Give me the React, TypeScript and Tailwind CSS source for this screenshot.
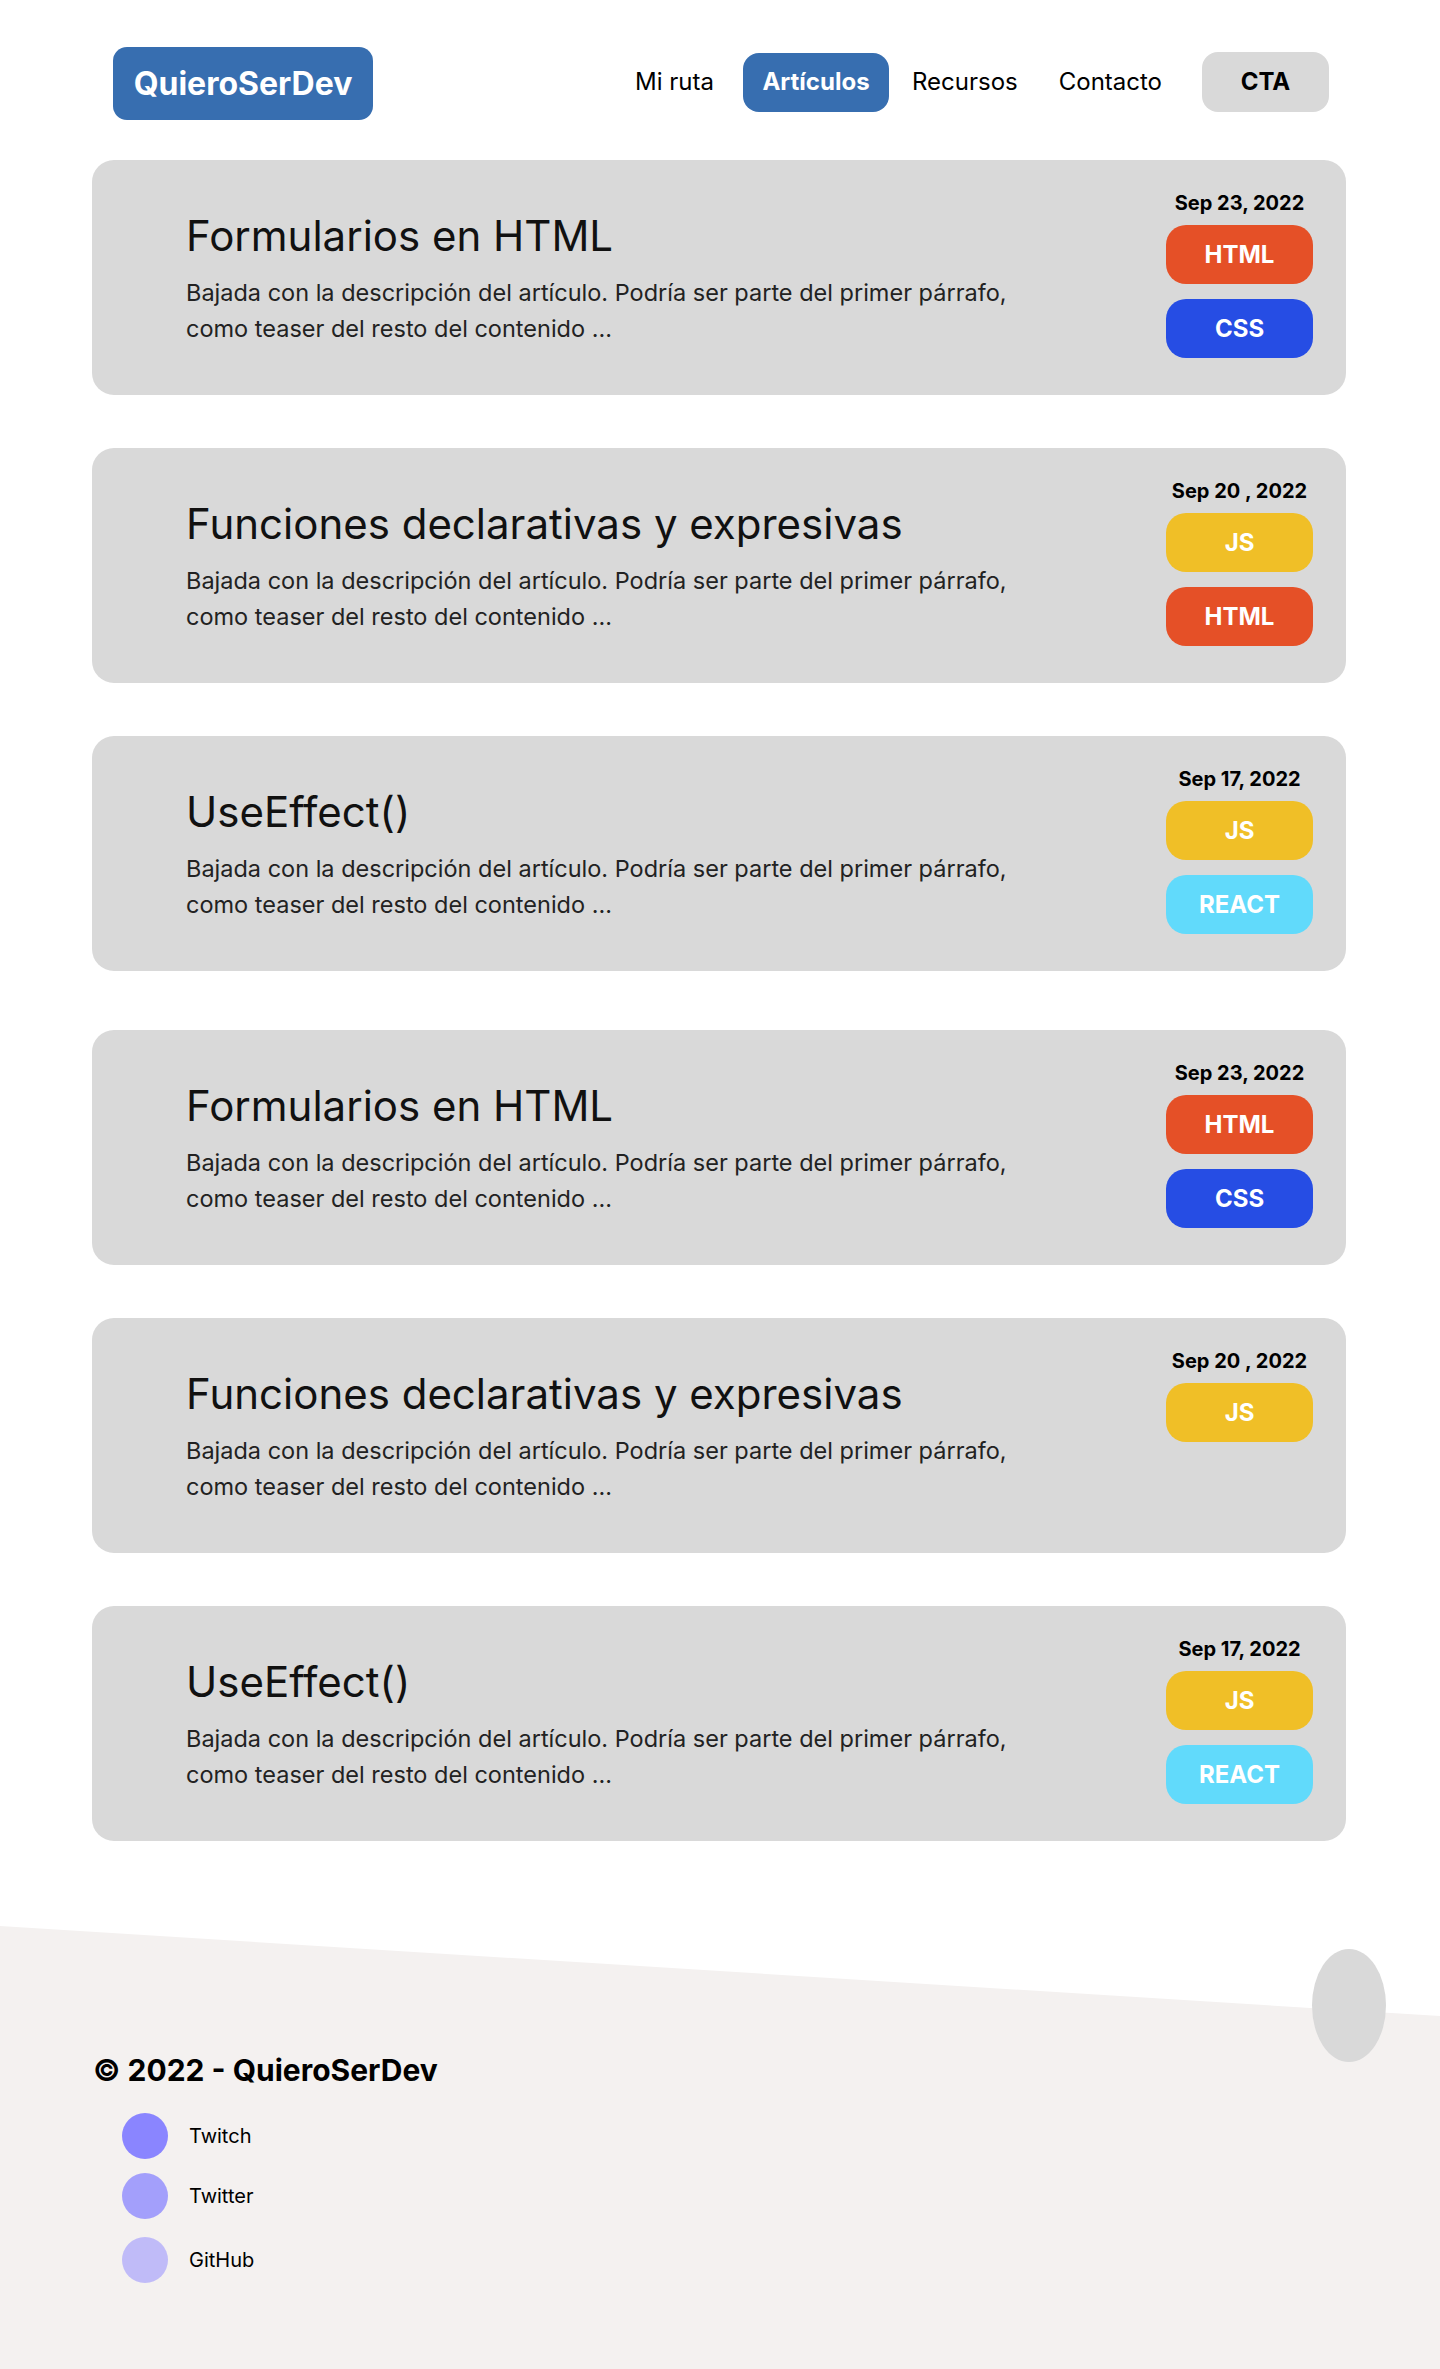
import React from 'react';

type Tag = 'HTML' | 'CSS' | 'JS' | 'REACT';

interface Post {
  title: string;
  date: string;
  tags: Tag[];
}

const tagStyles: Record<Tag, string> = {
  HTML: 'bg-[#e55027]',
  CSS: 'bg-[#264de4]',
  JS: 'bg-[#f0bf27]',
  REACT: 'bg-[#61dafb]',
};

const excerpt = [
  'Bajada con la descripción del artículo. Podría ser parte del primer párrafo,',
  'como teaser del resto del contenido ...',
];

const firstGroup: Post[] = [
  { title: 'Formularios en HTML', date: 'Sep 23, 2022', tags: ['HTML', 'CSS'] },
  { title: 'Funciones declarativas y expresivas', date: 'Sep 20 , 2022', tags: ['JS', 'HTML'] },
  { title: 'UseEffect()', date: 'Sep 17, 2022', tags: ['JS', 'REACT'] },
];

const secondGroup: Post[] = [
  { title: 'Formularios en HTML', date: 'Sep 23, 2022', tags: ['HTML', 'CSS'] },
  { title: 'Funciones declarativas y expresivas', date: 'Sep 20 , 2022', tags: ['JS'] },
  { title: 'UseEffect()', date: 'Sep 17, 2022', tags: ['JS', 'REACT'] },
];

const socials = [
  { label: 'Twitch', color: 'bg-[#8a85ff]', spacing: 'mt-[25px]' },
  { label: 'Twitter', color: 'bg-[#a39ffb]', spacing: 'mt-[14px]' },
  { label: 'GitHub', color: 'bg-[#c0bbf8]', spacing: 'mt-[18px]' },
];

function Header() {
  return (
    <header className="flex items-center justify-between pt-[47px] pl-[113px] pr-[111px]">
      {/* Brand */}
      <div className="h-[73px] w-[260px] rounded-[14px] bg-[#376eb0] flex items-center justify-center">
        <span className="text-[32px] font-bold text-white">QuieroSerDev</span>
      </div>

      {/* Navigation */}
      <nav className="mb-[3px] flex items-center text-[24px] text-black">
        <a className="px-[19px] h-[59px] flex items-center">Mi ruta</a>
        <a className="ml-[10px] px-[19px] h-[59px] w-[146px] flex items-center justify-center rounded-[16px] bg-[#376eb0] text-white font-bold">
          Artículos
        </a>
        <a className="ml-[4px] px-[19px] h-[59px] flex items-center">Recursos</a>
        <a className="ml-[3px] px-[19px] h-[59px] flex items-center">Contacto</a>
        <button className="ml-[21px] h-[60px] w-[127px] rounded-[16px] bg-[#d9d9d9] font-bold">CTA</button>
      </nav>
    </header>
  );
}

function PostCard({ post }: { post: Post }) {
  return (
    <article className="h-[235px] rounded-[22px] bg-[#d9d9d9] flex justify-between pl-[94px] pr-[33px]">
      <div className="pt-[51px]">
        <h2 className="text-[42px] leading-[50px] text-[#111]">{post.title}</h2>
        <p className="mt-[14px] text-[23.5px] leading-[36px] text-[#222]">
          {excerpt[0]}
          <br />
          {excerpt[1]}
        </p>
      </div>

      <div className="pt-[31px] w-[147px] flex flex-col items-center">
        <span className="text-[20px] leading-[24px] font-bold text-black whitespace-nowrap">{post.date}</span>
        <div className="mt-[10px] flex flex-col gap-[15px] w-full">
          {post.tags.map((tag) => (
            <span
              key={tag}
              className={`h-[59px] w-full rounded-[20px] flex items-center justify-center text-[24px] font-bold text-white ${tagStyles[tag]}`}
            >
              {tag}
            </span>
          ))}
        </div>
      </div>
    </article>
  );
}

function Footer() {
  return (
    <footer className="relative mt-[85px]">
      {/* Slanted top edge */}
      <div className="h-[90px] bg-[#f4f1f0] [clip-path:polygon(0_0,100%_100%,0_100%)]" />
      <div className="bg-[#f4f1f0] pt-[36px] pb-[86px] pl-[93px]">
        <h3 className="text-[30px] leading-[36px] font-bold text-black">© 2022 - QuieroSerDev</h3>
        <ul className="pl-[29px]">
          {socials.map((s) => (
            <li key={s.label} className={`flex items-center gap-[21px] ${s.spacing}`}>
              <span className={`h-[46px] w-[46px] rounded-full ${s.color}`} />
              <span className="text-[20px] text-black">{s.label}</span>
            </li>
          ))}
        </ul>
      </div>

      {/* Floating blob */}
      <div className="absolute top-[23px] right-[54px] h-[113px] w-[74px] rounded-[50%] bg-[#d9d9d9]" />
    </footer>
  );
}

export default function App() {
  return (
    <div className="min-h-[2369px] bg-white font-['Inter','Liberation_Sans',sans-serif]">
      <Header />

      <main className="mt-[40px] mx-[92px] w-[1254px]">
        <div className="flex flex-col gap-[53px]">
          {firstGroup.map((post, i) => (
            <PostCard key={i} post={post} />
          ))}
        </div>
        <div className="mt-[59px] flex flex-col gap-[53px]">
          {secondGroup.map((post, i) => (
            <PostCard key={i} post={post} />
          ))}
        </div>
      </main>

      <Footer />
    </div>
  );
}
